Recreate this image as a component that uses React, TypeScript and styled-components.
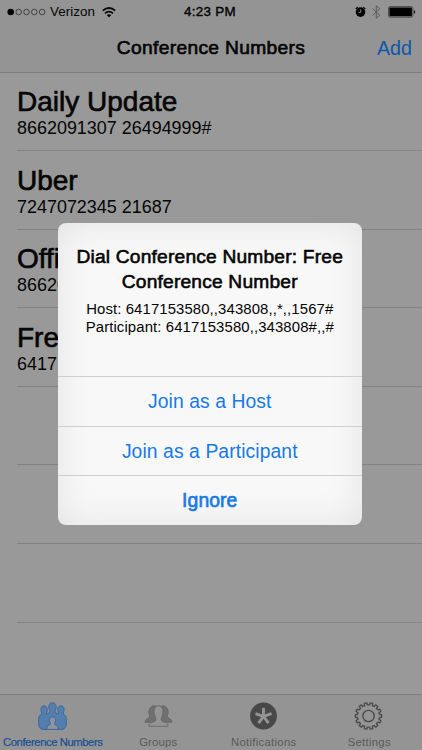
import React from "react";
import styled, { createGlobalStyle } from "styled-components";

const GlobalStyle = createGlobalStyle`
  * { box-sizing: border-box; }
  html, body { margin: 0; padding: 0; overflow: hidden; }
  body { font-family: "Liberation Sans", Arial, sans-serif; color: #050505; background: #999; }
  button { font: inherit; background: none; border: 0; padding: 0; margin: 0; }
  h1, h2, p { margin: 0; font-weight: 400; }
  svg { display: block; overflow: visible; flex: none; }
`;

const Phone = styled.div`
  position: relative;
  width: 422px;
  height: 750px;
  display: flex;
  flex-direction: column;
  overflow: hidden;
  background: #999;
`;

const Header = styled.header`
  height: 73px;
  flex: none;
  background: #949494;
  border-bottom: 1px solid #7c7c7e;
`;

const StatusBar = styled.div`
  height: 24px;
  display: grid;
  grid-template-columns: 1fr auto 1fr;
  align-items: center;
  padding: 0 6px 0 7px;
  font-size: 13.4px;
  line-height: 24px;
`;

const StatusGroup = styled.div<{ $end?: boolean }>`
  display: flex;
  align-items: center;
  justify-content: ${(p) => (p.$end ? "flex-end" : "flex-start")};
`;

const Carrier = styled.span`
  margin: 0 7px 0 4px;
  letter-spacing: 0.04px;
`;

const Clock = styled.span`
  margin-right: 3px;
  -webkit-text-stroke: 0.4px currentColor;
  letter-spacing: 0.3px;
`;

const Gap = styled.span<{ $size: number }>`
  width: ${(p) => p.$size}px;
`;

const NavBar = styled.div`
  height: 48px;
  display: grid;
  grid-template-columns: 1fr auto 1fr;
  align-items: center;
  padding: 0 10px;
`;

const NavTitle = styled.h1`
  grid-column: 2;
  font-size: 19.2px;
  line-height: 48px;
  letter-spacing: 0.33px;
  -webkit-text-stroke: 0.65px currentColor;
`;

const NavAction = styled.button`
  justify-self: end;
  font-size: 19.7px;
  line-height: 48px;
  color: #0e56ab;
`;

const List = styled.main`
  flex: 1;
  padding-left: 17px;
`;

const Row = styled.div`
  height: 78.6px;
  padding-top: 12.6px;
  border-bottom: 1px solid #828284;

  &:first-child {
    height: 78px;
    padding-top: 12px;
  }
`;

const RowTitle = styled.h2`
  font-size: 28px;
  line-height: 34px;
  white-space: nowrap;
  -webkit-text-stroke: 0.65px currentColor;
`;

const RowNumber = styled.p`
  margin-top: -1px;
  font-size: 17.95px;
  line-height: 20px;
  white-space: nowrap;
`;

const TabBar = styled.nav`
  height: 56px;
  flex: none;
  display: grid;
  grid-template-columns: repeat(4, 1fr);
  background: #949494;
  border-top: 1px solid #7c7c7c;
`;

const Tab = styled.button<{ $active?: boolean; $spacing?: number }>`
  display: flex;
  flex-direction: column;
  align-items: center;
  justify-content: space-between;
  padding: 7px 0 1px;
  font-size: 11.3px;
  line-height: 14px;
  white-space: nowrap;
  letter-spacing: ${(p) => p.$spacing ?? 0.2}px;
  color: ${(p) => (p.$active ? "#174f92" : "#5a5a5a")};
  -webkit-text-stroke: ${(p) => (p.$active ? "0.2px" : "0")} currentColor;
`;

const Alert = styled.section`
  position: absolute;
  left: 58px;
  top: 223px;
  width: 303.5px;
  height: 301.7px;
  display: grid;
  grid-template-rows: 1fr 49.6px 49.6px 49.4px;
  border-radius: 8px;
  background: #f8f8f8;
  box-shadow: inset 0 0 36px rgba(0, 0, 0, 0.09);
  overflow: hidden;
`;

const AlertBody = styled.div`
  padding-top: 20.5px;
  text-align: center;
`;

const AlertTitle = styled.h2`
  font-size: 19.2px;
  line-height: 25px;
  letter-spacing: 0.19px;
  -webkit-text-stroke: 0.6px currentColor;
`;

const AlertText = styled.p`
  margin-top: 6px;
  font-size: 14.9px;
  line-height: 18px;
  letter-spacing: 0.11px;
`;

const AlertButton = styled.button<{ $strong?: boolean }>`
  padding-top: 1px;
  border-top: 1px solid #cfcfd1;
  color: #1679ea;
  font-size: 19.3px;
  letter-spacing: 0.1px;
  line-height: 48px;
  -webkit-text-stroke: ${(p) => (p.$strong ? "0.65px" : "0")} currentColor;
`;

const SignalDots = () => (
  <svg width="39" height="8" viewBox="0 0 39 8">
    <circle cx="3.7" cy="4" r="3.3" fill="#050505" />
    {[11.7, 19.5, 27.3, 35.1].map((x) => (
      <circle key={x} cx={x} cy="4" r="2.8" fill="none" stroke="#222" strokeWidth="0.7" />
    ))}
  </svg>
);

const WifiIcon = () => (
  <svg width="14" height="11" viewBox="0 0 14 11" fill="none" stroke="#050505" strokeWidth="1.7">
    <path d="M.8 3.7Q7-1.7 13.2 3.7M3 6.3Q7 2.9 11 6.3" />
    <path d="M4.7 8Q7 6.3 9.3 8L7 10.4Z" fill="#050505" stroke="none" />
  </svg>
);

const AlarmIcon = () => (
  <svg width="11" height="12" viewBox="0 0 11 12">
    <circle cx="5.5" cy="6.1" r="4.8" fill="#050505" />
    <path d="M.7 3L2.8 1.1M8.2 1.1l2.1 1.9" stroke="#050505" strokeWidth="1.2" />
    <path d="M5.7 3.5v2.9H3.6" fill="none" stroke="#949494" strokeWidth=".9" />
  </svg>
);

const BluetoothIcon = () => (
  <svg width="9" height="14" viewBox="0 0 9 14" fill="none" stroke="#5c5c5c" strokeWidth="1">
    <path d="M.6 3.6l7.2 6.6-3.5 3.1V.7l3.5 3.1-7.2 6.6" />
  </svg>
);

const BatteryIcon = () => (
  <svg width="28" height="12" viewBox="0 0 28 12">
    <rect x=".5" y=".6" width="24.3" height="10.6" rx="1.6" fill="none" stroke="#303030" strokeWidth=".7" />
    <rect x="1.4" y="1.5" width="22.5" height="8.8" rx=".7" fill="#020202" />
    <path d="M25.8 4v4q1.4-.5 1.4-2t-1.4-2Z" fill="#111" />
  </svg>
);

const ConferenceIcon = () => (
  <svg width="29" height="28" viewBox="0 0 30 29">
    <g fill="#547eae" stroke="#346397" strokeWidth=".9" strokeLinejoin="round">
      <path d="M3.9 11.3C2.2 8.5 2.8 4 6.2 4s4.2 4.3 2.6 7.1l.1 1.4 3.2-1.6.4-1.6C10 5.6 11.1.7 15 .7s5 4.9 2.5 8.6l.4 1.6 3.2 1.6.1-1.4C19.6 8.3 20.3 4 23.8 4s4 4.5 2.3 7.3l.4 1.6c2.1.9 2.8 2.3 2.8 4.6v5.7c0 3-2 4.7-4.4 5.2H5.1C2.6 27.9.7 26.2.7 23.2v-5.7c0-2.3.7-3.7 2.8-4.6Z" />
      <path d="M9 28.4c0-3 1-4.1 3.2-4.7l.7-1.5c-2-2.8-1.1-6.8 2.1-6.8s4.1 4 2.1 6.8l.7 1.5c2.2.6 3.2 1.7 3.2 4.7Z" fill="#8d969f" />
    </g>
  </svg>
);

const GroupsIcon = () => (
  <svg width="29" height="28" viewBox="0 0 29 29">
    <g strokeLinejoin="round" strokeWidth=".9">
      <path d="M7 5.2C8 3.8 10.3 3.5 12 4.7V21H.8c-.6-2.3 1.5-3.4 3.6-4.7.8-.5 1.3-1.2.8-2.6C3.8 10.8 4.3 6.8 7 5.2Zm15 0c-1-1.4-3.3-1.7-5-.5V21h11.2c.6-2.3-1.5-3.4-3.6-4.7-.8-.5-1.3-1.2-.8-2.6 1.4-2.9.9-6.9-1.8-8.5Z" fill="#707070" stroke="#646464" />
      <path d="M4.7 25.2c-.2-2 .7-3.6 3-4.1l3-1.1c1.1-.4 1.3-2.3.5-4.3-2.4-4.9-1.7-11.9 3.3-11.9s5.7 7 3.3 11.9c-.8 2-.6 3.9.5 4.3l3 1.1c2.3.5 3.2 2.1 3 4.1Z" fill="#949494" stroke="#666" />
    </g>
  </svg>
);

const NotificationsIcon = () => (
  <svg width="29" height="28" viewBox="0 0 29 29">
    <circle cx="14.5" cy="14.5" r="13.9" fill="#484848" />
    <g stroke="#949494" strokeWidth="3">
      {[0, 72, 144, 216, 288].map((angle) => (
        <path key={angle} d="M14.5 14.8V6" transform={`rotate(${angle} 14.5 14.8)`} />
      ))}
    </g>
  </svg>
);

const teeth = 14;
const gearPath =
  Array.from({ length: teeth }, (_, i) => {
    const step = (Math.PI * 2) / teeth;
    const center = (i + 0.5) * step - Math.PI / 2;
    return [
      [-0.3, 11.5],
      [-0.22, 13.7],
      [0.22, 13.7],
      [0.3, 11.5],
    ]
      .map(([offset, radius], j) => {
        const angle = center + offset * step;
        const x = (14.5 + radius * Math.cos(angle)).toFixed(2);
        const y = (14.5 + radius * Math.sin(angle)).toFixed(2);
        return `${i === 0 && j === 0 ? "M" : "L"}${x} ${y}`;
      })
      .join("");
  }).join("") + "Z";

const SettingsIcon = () => (
  <svg width="30" height="28" viewBox="0 0 30 29" fill="none" stroke="#4a4a4a" strokeWidth="1.4" strokeLinejoin="round">
    <path d={gearPath} />
    <circle cx="14.5" cy="14.5" r="5.9" />
  </svg>
);

const conferences = [
  { name: "Daily Update", number: "8662091307 26494999#" },
  { name: "Uber", number: "7247072345 21687" },
  { name: "Office", number: "8662091307" },
  { name: "Free Conference", number: "6417153580" },
];

export default function App() {
  return (
    <>
      <GlobalStyle />
      <Phone>
        <Header>
          <StatusBar>
            <StatusGroup>
              <SignalDots />
              <Carrier>Verizon</Carrier>
              <WifiIcon />
            </StatusGroup>
            <Clock>4:23 PM</Clock>
            <StatusGroup $end>
              <AlarmIcon />
              <Gap $size={6} />
              <BluetoothIcon />
              <Gap $size={7} />
              <BatteryIcon />
            </StatusGroup>
          </StatusBar>
          <NavBar>
            <NavTitle>Conference Numbers</NavTitle>
            <NavAction>Add</NavAction>
          </NavBar>
        </Header>
        <List>
          {conferences.map((c) => (
            <Row key={c.name}>
              <RowTitle>{c.name}</RowTitle>
              <RowNumber>{c.number}</RowNumber>
            </Row>
          ))}
          <Row />
          <Row />
          <Row />
        </List>
        <TabBar>
          <Tab $active $spacing={-0.44}>
            <ConferenceIcon />
            Conference Numbers
          </Tab>
          <Tab>
            <GroupsIcon />
            Groups
          </Tab>
          <Tab $spacing={0.3}>
            <NotificationsIcon />
            Notifications
          </Tab>
          <Tab $spacing={0.3}>
            <SettingsIcon />
            Settings
          </Tab>
        </TabBar>
        <Alert role="alertdialog">
          <AlertBody>
            <AlertTitle>
              Dial Conference Number: Free
              <br />
              Conference Number
            </AlertTitle>
            <AlertText>
              Host: 6417153580,,343808,,*,,1567#
              <br />
              Participant: 6417153580,,343808#,,#
            </AlertText>
          </AlertBody>
          <AlertButton>Join as a Host</AlertButton>
          <AlertButton>Join as a Participant</AlertButton>
          <AlertButton $strong>Ignore</AlertButton>
        </Alert>
      </Phone>
    </>
  );
}
